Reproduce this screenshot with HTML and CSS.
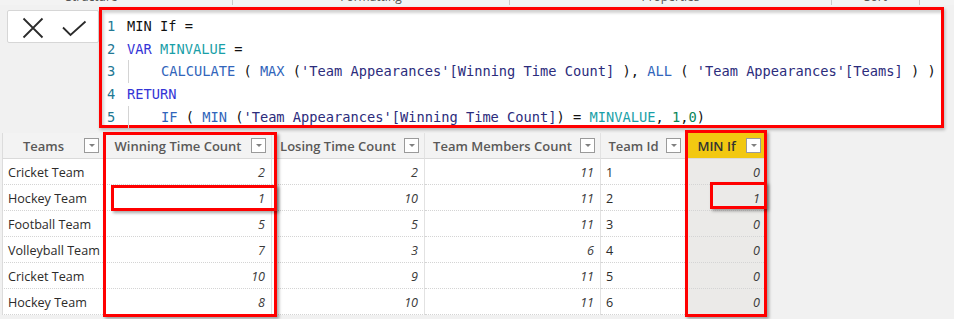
FILE: index.html
```html
<!DOCTYPE html>
<html>
<head>
<meta charset="utf-8">
<link rel="stylesheet" href="styles.css">
</head>
<body>
<div class="ribbon">
  <div class="rseg rs1"><span>Structure</span></div>
  <div class="rseg rs2"><span>Formatting</span></div>
  <div class="rseg rs3"><span>Properties</span></div>
  <div class="rseg rs4"><span>Sort</span></div>
  <div class="rseg rs5"><span></span></div>
</div>

<div class="formula">
  <div class="fbtns">
    <svg width="92" height="33" viewBox="0 0 92 33">
      <path d="M16.5 8.5 L35.5 27.5 M35.5 8.5 L16.5 27.5" stroke="#2b2b2b" stroke-width="1.8" fill="none"/>
      <path d="M56 17.5 L63.5 25 L78.5 11.5" stroke="#2b2b2b" stroke-width="1.8" fill="none"/>
    </svg>
  </div>
  <div class="editor">
    <div class="ln"><span class="num">1</span><span class="code">MIN If =</span></div>
    <div class="ln"><span class="num">2</span><span class="code"><span class="kw">VAR</span> <span class="vr">MINVALUE</span> =</span></div>
    <div class="ln"><span class="num">3</span><span class="code"><span class="ind">    </span><span class="fn">CALCULATE</span> ( <span class="fn">MAX</span> (<span class="col">'Team Appearances'[Winning Time Count]</span> ), <span class="fn">ALL</span> ( <span class="col">'Team Appearances'[Teams]</span> ) )</span></div>
    <div class="ln"><span class="num">4</span><span class="code"><span class="kw">RETURN</span></span></div>
    <div class="ln"><span class="num">5</span><span class="code"><span class="ind">    </span><span class="fn">IF</span> ( <span class="fn">MIN</span> (<span class="col">'Team Appearances'[Winning Time Count]</span>) = <span class="vr">MINVALUE</span>, <span class="nm">1</span>,<span class="nm">0</span>)</span></div>
  </div>
</div>

<div class="gridwrap">
  <div class="table">
    <div class="th"><span class="hl">Teams</span><span class="dd"></span></div>
    <div class="th"><span class="hl">Winning Time Count</span><span class="dd"></span></div>
    <div class="th"><span class="hl">Losing Time Count</span><span class="dd"></span></div>
    <div class="th"><span class="hl">Team Members Count</span><span class="dd"></span></div>
    <div class="th"><span class="hl">Team Id</span><span class="dd"></span></div>
    <div class="th thsel"><span class="hl">MIN If</span><span class="dd"></span></div>

    <div class="td txt">Cricket Team</div><div class="td n">2</div><div class="td n">2</div><div class="td n">11</div><div class="td txt">1</div><div class="td n sel">0</div>
    <div class="td txt">Hockey Team</div><div class="td n">1</div><div class="td n">10</div><div class="td n">11</div><div class="td txt">2</div><div class="td n sel">1</div>
    <div class="td txt">Football Team</div><div class="td n">5</div><div class="td n">5</div><div class="td n">11</div><div class="td txt">3</div><div class="td n sel">0</div>
    <div class="td txt">Volleyball Team</div><div class="td n">7</div><div class="td n">3</div><div class="td n">6</div><div class="td txt">4</div><div class="td n sel">0</div>
    <div class="td txt">Cricket Team</div><div class="td n">10</div><div class="td n">9</div><div class="td n">11</div><div class="td txt">5</div><div class="td n sel">0</div>
    <div class="td txt">Hockey Team</div><div class="td n">8</div><div class="td n">10</div><div class="td n">11</div><div class="td txt">6</div><div class="td n sel">0</div>
  </div>
  <div class="mark mk-wcol"></div>
  <div class="mark mk-wrow"></div>
  <div class="mark mk-mcol"></div>
  <div class="mark mk-mrow"></div>
</div>
</body>
</html>
```

FILE: styles.css
```css
* { box-sizing: border-box; }
html, body { margin: 0; padding: 0; }
body {
  background: #f1f1f1;
  width: 954px;
  height: 319px;
  overflow: hidden;
  font-family: "Open Sans", "Noto Sans", sans-serif;
}

/* ribbon remnant */
.ribbon {
  display: flex;
  height: 5px;
  overflow: hidden;
  background: #f3f3f3;
}
.rseg {
  border-right: 1px solid #c9c9c9;
  text-align: center;
  font-size: 12px;
  color: #555;
  line-height: 12px;
  height: 5px;
}
.rseg span { display: block; margin-top: -9px; }
.rs1 { width: 282px; margin-left: -49px; }
.rs2 { width: 277px; }
.rs3 { width: 322px; }
.rs4 { width: 88px; }
.rs5 { flex: 1; border-right: none; }

/* formula bar */
.formula {
  display: flex;
  align-items: flex-start;
  padding-top: 2px;
  padding-left: 7px;
  height: 128px;
}
.fbtns {
  width: 92px;
  height: 33px;
  margin-top: 3px;
  background: #ffffff;
  border: 1px solid #d6d6d6;
  border-radius: 2px;
}
.fbtns svg { display: block; margin: -1px 0 0 -1px; }
.editor {
  width: 845px;
  height: 121px;
  border: 3px solid #ff0000;
  background: #ffffff;
  box-shadow: inset 2px 3px 3px rgba(0,0,0,0.18), 1px 2px 3px rgba(0,0,0,0.25);
  padding: 5px 0 0 5px;
  font-family: "DejaVu Sans Mono", "Liberation Mono", monospace;
  font-size: 13.7px;
  line-height: 22.7px;
  color: #111;
}
.ln { display: flex; height: 22.7px; white-space: pre; }
.num { width: 20px; color: #237893; }
.code { color: #111; white-space: pre; }
.ind { border-left: 1px solid #d4d4d4; margin-left: 1px; margin-right: -1px; display: inline-block; height: 22.7px; vertical-align: top; }
.kw { color: #3434d6; }
.vr { color: #1a9fa8; }
.fn { color: #3165bb; }
.col { color: #2c2c7c; }
.nm { color: #098658; }

/* table */
.gridwrap {
  position: relative;
}
.table {
  display: grid;
  grid-template-columns: 103px 167px 153px 176px 86px 79px;
  grid-auto-rows: 26px;
  width: 766px;
  padding-left: 2px;
  font-size: 12.6px;
}
.table > div:nth-child(6n+1) { border-left: 1px solid #dcdcdc; }
.th {
  display: flex;
  align-items: center;
  background: #f3f3f3;
  border-right: 1px solid #e2e2e2;
  border-bottom: 1px solid #dadada;
  color: #5a5958;
  font-weight: 600;
  font-size: 13px;
  padding-right: 5px;
}
.hl { flex: 1; text-align: center; white-space: nowrap; }
.dd {
  width: 15px;
  height: 15px;
  border: 1px solid #9a9a9a;
  background: #ffffff;
  position: relative;
}
.dd::after {
  content: "";
  position: absolute;
  left: 3.5px;
  top: 5px;
  border-left: 3px solid transparent;
  border-right: 3px solid transparent;
  border-top: 3px solid #808080;
}
.thsel { background: #f2c811; color: #333; border-right: none; }
.td {
  display: flex;
  align-items: center;
  background: #ffffff;
  border-right: 1px solid #e2e2e2;
  border-bottom: 1px dotted #d4d4d4;
  color: #2c2b2a;
  white-space: nowrap;
  padding-top: 2px;
}
.txt { padding-left: 5px; }
.n { justify-content: flex-end; padding-right: 6px; font-style: italic; color: #3a3a3a; }
.sel { background: #ebeae8; border-right: none; }

/* red markers */
.mark {
  position: absolute;
  border: 3px solid #ff0000;
  box-shadow: 2px 2px 3px rgba(0,0,0,0.35);
}
.mk-wcol { left: 103px; top: -1px; width: 174px; height: 185px; }
.mk-wrow { left: 111px; top: 52px; width: 166px; height: 26px; }
.mk-mcol { left: 685px; top: -3px; width: 82px; height: 187px; }
.mk-mrow { left: 710px; top: 49px; width: 57px; height: 27px; }
```
